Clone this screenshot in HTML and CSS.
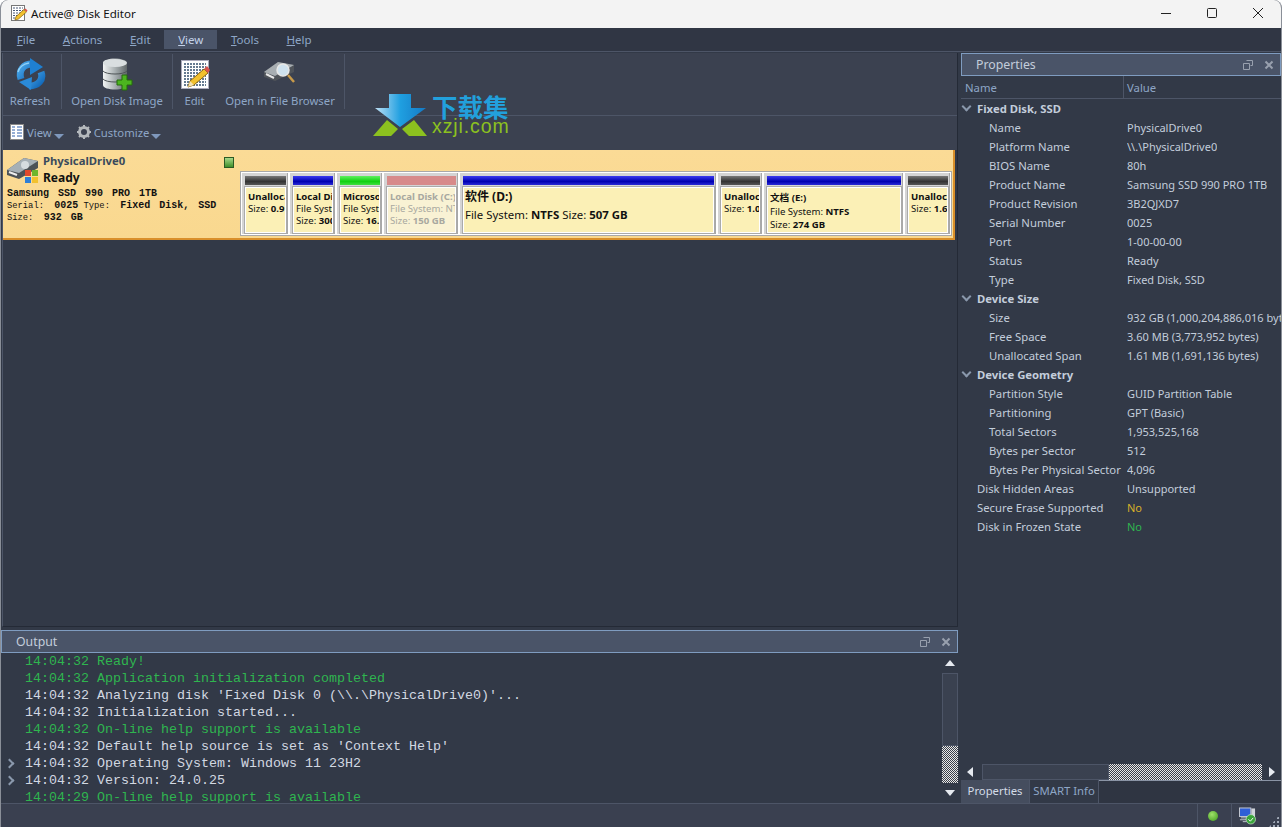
FILE: index.html
```html
<!DOCTYPE html>
<html lang="en">

<head>
    <meta charset="UTF-8">
    <meta name="viewport" content="width=device-width, initial-scale=1.0">
    <title>Active@ Disk Editor</title>
    <link rel="stylesheet" href="styles.css">
</head>

<body>
    <div class="window">
        <header class="titlebar">
            <svg class="app-icon" width="18" height="18" viewBox="0 0 18 18">
                <rect x="1.5" y="1.5" width="13" height="15" fill="#fff" stroke="#777" />
                <path d="M3 4h10M3 6.500h10M3 9h8M3 11.500h5M3 14h3" stroke="#4a5a78" stroke-dasharray="2 1" />
                <path d="M5 16l1-3.500 8-7 2.500 2.500-8 7z" fill="#f2c12e" stroke="#8a6410" stroke-width=".7" />
                <path d="M14 5.500l2.500 2.500 1-1.500-2-2z" fill="#d9534f" />
            </svg>
            <span class="titlebar-text">Active@ Disk Editor</span>
            <div class="window-buttons">
                <svg width="12" height="12" viewBox="0 0 12 12"><path d="M1 6.500h10" stroke="#222" /></svg>
                <svg width="12" height="12" viewBox="0 0 12 12"><rect x="1.500" y="1.500" width="9" height="9" rx="1" fill="none" stroke="#222" /></svg>
                <svg width="12" height="12" viewBox="0 0 12 12"><path d="M1 1l10 10M11 1L1 11" stroke="#222" /></svg>
            </div>
        </header>

        <nav class="menubar">
            <span class="menu-item"><u>F</u>ile</span>
            <span class="menu-item"><u>A</u>ctions</span>
            <span class="menu-item"><u>E</u>dit</span>
            <span class="menu-item menu-item-active"><u>V</u>iew</span>
            <span class="menu-item"><u>T</u>ools</span>
            <span class="menu-item"><u>H</u>elp</span>
        </nav>

        <div class="workspace">
            <div class="left-column">
                <section class="disk-view">
                    <div class="toolbar">
                        <div class="tool-group tool-group-refresh">
                            <div class="tool">
                                <svg width="32" height="34" viewBox="0 0 32 34">
                                    <defs>
                                        <linearGradient id="blue" x1="0" y1="0" x2="1" y2="1">
                                            <stop offset="0" stop-color="#4aa8ea" />
                                            <stop offset="1" stop-color="#0f66b8" />
                                        </linearGradient>
                                    </defs>
                                    <path d="M7 22C4 13 10 7 18 7" fill="none" stroke="url(#blue)" stroke-width="7" />
                                    <path d="M16 1l13 9-13 8z" fill="#1f80d2" />
                                    <path d="M27 15c3 8-3 14-12 14" fill="none" stroke="url(#blue)" stroke-width="7" />
                                    <path d="M18 20L5 25l12 8z" fill="#2a8ad8" />
                                    <path d="M4 15c1-4 5-8 11-9" fill="none" stroke="#8fd0f6" stroke-width="1.500" />
                                </svg>
                                <span>Refresh</span>
                            </div>
                        </div>
                        <div class="tool-group tool-group-image">
                            <div class="tool">
                                <svg width="32" height="34" viewBox="0 0 32 34">
                                    <defs>
                                        <linearGradient id="steel" x1="0" y1="0" x2="1" y2="0">
                                            <stop offset="0" stop-color="#f2f4f4" />
                                            <stop offset=".5" stop-color="#a9b0b2" />
                                            <stop offset="1" stop-color="#5f6668" />
                                        </linearGradient>
                                    </defs>
                                    <path d="M2 6c0-6 24-6 24 0v22c0 6-24 6-24 0z" fill="url(#steel)" />
                                    <ellipse cx="14" cy="6" rx="12" ry="4" fill="#d9dee0" />
                                    <path d="M2 14c3 4 21 4 24 0M2 22c3 4 21 4 24 0" stroke="#4f5557" fill="none" />
                                    <path d="M21 18h5v5h5v5h-5v5h-5v-5h-5v-5h5z" fill="#4cb51f" stroke="#256b0c" />
                                </svg>
                                <span>Open Disk Image</span>
                            </div>
                        </div>
                        <div class="tool-group tool-group-edit">
                            <div class="tool tool-edit">
                                <svg width="30" height="34" viewBox="0 0 30 34">
                                    <rect x="1.500" y="3.500" width="27" height="28" fill="#fff" stroke="#aab" />
                                    <path d="M4 7h22M4 10h22M4 13h22M4 16h22M4 19h22M4 22h22M4 25h22M4 28h22" stroke="#34506e" stroke-width="1.500" stroke-dasharray="2 1" />
                                    <path d="M8 30l2-6 14-12 4 4-14 12z" fill="#f2c12e" stroke="#8a6410" />
                                    <path d="M24 12l4 4 2-3-3-4z" fill="#d9534f" />
                                    <path d="M8 30l2-6 4 4z" fill="#f5e2b0" />
                                </svg>
                                <span>Edit</span>
                            </div>
                            <div class="tool tool-browser">
                                <svg width="34" height="34" viewBox="0 0 34 34">
                                    <path d="M1 15L15 5l16 3v7L12 24 1 20z" fill="#50545a" />
                                    <path d="M1 15L15 5l16 3-19 11z" fill="#a8aeb2" />
                                    <path d="M3 17l8 4" stroke="#e8e8e8" stroke-width="2" />
                                    <circle cx="20" cy="13" r="6" fill="#cfe2ef" stroke="#e8e8e8" stroke-width="1.500" />
                                    <path d="M25 18l6 7" stroke="#c89a4a" stroke-width="2.500" />
                                </svg>
                                <span>Open in File Browser</span>
                            </div>
                        </div>
                    </div>

                    <div class="subtoolbar">
                        <div class="subtool">
                            <svg width="14" height="16" viewBox="0 0 14 16">
                                <rect x=".5" y=".5" width="13" height="15" fill="#fff" stroke="#888" />
                                <path d="M2 3h3M2 6h3M2 9h3M2 12h3M7 3h5M7 6h5M7 9h5M7 12h5" stroke="#2f5fa8" />
                            </svg>
                            <span>View</span>
                            <i class="drop-arrow"></i>
                        </div>
                        <div class="subtool">
                            <svg width="14" height="14" viewBox="0 0 14 14">
                                <circle cx="7" cy="7" r="4.500" fill="none" stroke="#b4b8bc" stroke-width="3" />
                                <path d="M7 0v3M7 11v3M0 7h3M11 7h3M2 2l2 2M10 10l2 2M12 2l-2 2M2 12l2-2" stroke="#b4b8bc" stroke-width="2" />
                            </svg>
                            <span>Customize</span>
                            <i class="drop-arrow"></i>
                        </div>
                    </div>

                    <div class="disk-row">
                        <div class="disk-info">
                            <div class="disk-head">
                                <svg class="disk-icon" width="33" height="28" viewBox="0 0 33 28">
                                    <path d="M1 13L18 1l14 3v7L13 22 1 18z" fill="#4d5357" />
                                    <path d="M1 13L18 1l14 3-19 12z" fill="#a6b0b6" />
                                    <circle cx="19" cy="8" r="4" fill="#d6dcdf" />
                                    <path d="M3 15l8 3" stroke="#eee" stroke-width="2" />
                                    <rect x="19" y="13" width="6" height="6" fill="#e0492c" />
                                    <rect x="26" y="13" width="6" height="6" fill="#6fb52c" />
                                    <rect x="19" y="20" width="6" height="6" fill="#2f7fd6" />
                                    <rect x="26" y="20" width="6" height="6" fill="#f2c12e" />
                                </svg>
                                <div class="disk-title">
                                    <span class="disk-name">PhysicalDrive0</span>
                                    <span class="disk-state">Ready</span>
                                </div>
                                <i class="disk-led"></i>
                            </div>
                            <div class="disk-line"><b class="first">Samsung SSD 990 PRO 1TB</b></div>
                            <div class="disk-line">Serial: <b>0025</b> Type: <b>Fixed Disk, SSD</b></div>
                            <div class="disk-line">Size: <b>932 GB</b></div>
                        </div>

                        <div class="partitions">
                            <div class="part part-small part-free part-first">
                                <div class="part-bar"></div>
                                <div class="part-body"><b>Unallocated</b><span>Size: <b>0.9 MB</b></span></div>
                            </div>
                            <div class="part part-small part-ntfs">
                                <div class="part-bar"></div>
                                <div class="part-body"><b>Local Disk</b><span>File System</span><span>Size: <b>300 MB</b></span></div>
                            </div>
                            <div class="part part-small part-ms">
                                <div class="part-bar"></div>
                                <div class="part-body"><b>Microsoft</b><span>File System</span><span>Size: <b>16.0 MB</b></span></div>
                            </div>
                            <div class="part part-c part-dim">
                                <div class="part-bar"></div>
                                <div class="part-body"><b>Local Disk (C:)</b><span>File System: NTFS</span><span>Size: <b>150 GB</b></span></div>
                            </div>
                            <div class="part part-d part-ntfs">
                                <div class="part-bar"></div>
                                <div class="part-body part-body-large"><b class="part-d-name">软件 (D:)</b><span>File System: <b>NTFS</b> Size: <b>507 GB</b></span></div>
                            </div>
                            <div class="part part-small part-free part-thin">
                                <div class="part-bar"></div>
                                <div class="part-body"><b>Unallocated</b><span>Size: <b>1.0 MB</b></span></div>
                            </div>
                            <div class="part part-e part-ntfs">
                                <div class="part-bar"></div>
                                <div class="part-body"><b>文档 (E:)</b><span>File System: <b>NTFS</b></span><span>Size: <b>274 GB</b></span></div>
                            </div>
                            <div class="part part-small part-free">
                                <div class="part-bar"></div>
                                <div class="part-body"><b>Unallocated</b><span>Size: <b>1.6 MB</b></span></div>
                            </div>
                        </div>
                    </div>
                </section>

                <section class="output-pane">
                    <div class="pane-title">
                        <span>Output</span>
                        <div class="pane-buttons">
                            <svg width="10" height="10" viewBox="0 0 10 10"><path d="M3.500.5h6v5h-2M.5 3.500h6v6h-6z" fill="none" stroke="#98a0ae" /></svg>
                            <svg width="10" height="10" viewBox="0 0 10 10"><path d="M1.500 1.500l7 7M8.500 1.500l-7 7" stroke="#98a0ae" stroke-width="2" /></svg>
                        </div>
                    </div>
                    <div class="output-body">
                        <div class="log">
                            <div class="log-line log-ok">14:04:32 Ready!</div>
                            <div class="log-line log-ok">14:04:32 Application initialization completed</div>
                            <div class="log-line">14:04:32 Analyzing disk 'Fixed Disk 0 (\\.\PhysicalDrive0)'...</div>
                            <div class="log-line">14:04:32 Initialization started...</div>
                            <div class="log-line log-ok">14:04:32 On-line help support is available</div>
                            <div class="log-line">14:04:32 Default help source is set as 'Context Help'</div>
                            <div class="log-line log-more">14:04:32 Operating System: Windows 11 23H2</div>
                            <div class="log-line log-more">14:04:32 Version: 24.0.25</div>
                            <div class="log-line log-ok">14:04:29 On-line help support is available</div>
                        </div>
                        <div class="vscroll">
                            <i class="arrow-up"></i>
                            <div class="vscroll-track"></div>
                            <div class="vscroll-thumb dither"></div>
                            <i class="arrow-down"></i>
                        </div>
                    </div>
                </section>
            </div>

            <aside class="props-pane">
                <div class="pane-title">
                    <span>Properties</span>
                    <div class="pane-buttons">
                        <svg width="10" height="10" viewBox="0 0 10 10"><path d="M3.500.5h6v5h-2M.5 3.500h6v6h-6z" fill="none" stroke="#98a0ae" /></svg>
                        <svg width="10" height="10" viewBox="0 0 10 10"><path d="M1.500 1.500l7 7M8.500 1.500l-7 7" stroke="#98a0ae" stroke-width="2" /></svg>
                    </div>
                </div>
                <div class="props-head"><span class="col-name">Name</span><span class="col-value">Value</span></div>
                <div class="props-list">
                    <div class="prop prop-group"><i class="chevron"></i>Fixed Disk, SSD</div>
                    <div class="prop"><span class="prop-name">Name</span><span class="prop-value">PhysicalDrive0</span></div>
                    <div class="prop"><span class="prop-name">Platform Name</span><span class="prop-value">\\.\PhysicalDrive0</span></div>
                    <div class="prop"><span class="prop-name">BIOS Name</span><span class="prop-value">80h</span></div>
                    <div class="prop"><span class="prop-name">Product Name</span><span class="prop-value">Samsung SSD 990 PRO 1TB</span></div>
                    <div class="prop"><span class="prop-name">Product Revision</span><span class="prop-value">3B2QJXD7</span></div>
                    <div class="prop"><span class="prop-name">Serial Number</span><span class="prop-value">0025</span></div>
                    <div class="prop"><span class="prop-name">Port</span><span class="prop-value">1-00-00-00</span></div>
                    <div class="prop"><span class="prop-name">Status</span><span class="prop-value">Ready</span></div>
                    <div class="prop"><span class="prop-name">Type</span><span class="prop-value">Fixed Disk, SSD</span></div>
                    <div class="prop prop-group"><i class="chevron"></i>Device Size</div>
                    <div class="prop"><span class="prop-name">Size</span><span class="prop-value">932 GB (1,000,204,886,016 bytes)</span></div>
                    <div class="prop"><span class="prop-name">Free Space</span><span class="prop-value">3.60 MB (3,773,952 bytes)</span></div>
                    <div class="prop"><span class="prop-name">Unallocated Span</span><span class="prop-value">1.61 MB (1,691,136 bytes)</span></div>
                    <div class="prop prop-group"><i class="chevron"></i>Device Geometry</div>
                    <div class="prop"><span class="prop-name">Partition Style</span><span class="prop-value">GUID Partition Table</span></div>
                    <div class="prop"><span class="prop-name">Partitioning</span><span class="prop-value">GPT (Basic)</span></div>
                    <div class="prop"><span class="prop-name">Total Sectors</span><span class="prop-value">1,953,525,168</span></div>
                    <div class="prop"><span class="prop-name">Bytes per Sector</span><span class="prop-value">512</span></div>
                    <div class="prop"><span class="prop-name">Bytes Per Physical Sector</span><span class="prop-value">4,096</span></div>
                    <div class="prop prop-top"><span class="prop-name">Disk Hidden Areas</span><span class="prop-value">Unsupported</span></div>
                    <div class="prop prop-top"><span class="prop-name">Secure Erase Supported</span><span class="prop-value value-warn">No</span></div>
                    <div class="prop prop-top"><span class="prop-name">Disk in Frozen State</span><span class="prop-value value-good">No</span></div>
                </div>
                <div class="hscroll">
                    <i class="arrow-left"></i>
                    <div class="hscroll-track"></div>
                    <div class="hscroll-thumb dither"></div>
                    <i class="arrow-right"></i>
                </div>
                <div class="tabs">
                    <span class="tab tab-active">Properties</span>
                    <span class="tab">SMART Info</span>
                    <div class="tabs-rest"></div>
                </div>
            </aside>
        </div>

        <footer class="statusbar">
            <div class="status-cell status-led"><i class="led"></i></div>
            <div class="status-cell status-net">
                <svg width="17" height="18" viewBox="0 0 18 18">
                    <rect x=".5" y=".5" width="12" height="9" fill="#2f5fd6" stroke="#c8ccd4" />
                    <rect x="13" y="1" width="4" height="9" fill="#d0d4da" />
                    <path d="M2 11h10M1 13h7M4 15h4" stroke="#c8ccd4" />
                    <circle cx="12.500" cy="12.500" r="5" fill="#3aa53a" stroke="#e8f5e8" stroke-width=".6" />
                    <path d="M10 12.500l2 2 3-3.500" stroke="#fff" fill="none" />
                </svg>
            </div>
            <div class="grip"></div>
        </footer>

        <div class="watermark">
            <svg width="54" height="44" viewBox="0 0 54 44">
                <defs>
                    <linearGradient id="wm" x1="0" y1="0" x2="1" y2="0">
                        <stop offset="0" stop-color="#bfe0f5" />
                        <stop offset=".5" stop-color="#1f9fe0" />
                        <stop offset="1" stop-color="#1579c4" />
                    </linearGradient>
                </defs>
                <path d="M16 1h22v14h15L27 34 2 15h14z" fill="url(#wm)" />
                <path d="M0 43l14-16 11 9-7 7zM54 43L41 27l-12 9 7 7z" fill="#8cc11f" />
            </svg>
            <div class="watermark-text">
                <span class="watermark-cn">下载集</span>
                <span class="watermark-url">xzji.com</span>
            </div>
        </div>
    </div>
</body>

</html>
```

FILE: styles.css
```css
html {
    box-sizing: border-box;
}

*,
*::before,
*::after {
    box-sizing: inherit;
    margin: 0;
    padding: 0;
}

:root {
    --bg-color: #323947;
    --panel-color: #3b4150;
    --menu-color: #303644;
    --line-color: #4d5567;
    --title-color: #4a5468;
    --text-color: #c3cddb;
    --text-dim: #8ea6c6;
    --ok-color: #2fb54f;
}

body {
    background-color: #fff;
    font-family: 'Noto Sans', 'Noto Sans CJK SC', sans-serif;
    font-size: 11.300px;
    overflow: hidden;
}

svg {
    display: block;
    flex-shrink: 0;
}

.window {
    position: relative;
    width: 1282px;
    height: 827px;
    display: flex;
    flex-direction: column;
    background-color: var(--bg-color);
    border-left: 1px solid #8a8f98;
    border-right: 1px solid #8a8f98;
    border-radius: 8px 8px 0 0;
    overflow: hidden;
}

.titlebar {
    height: 28px;
    display: flex;
    align-items: center;
    flex-shrink: 0;
    background-color: #f3f3f3;
    padding: 0 0 2px 9px;
    color: #111;
}

.titlebar-text {
    margin-left: 3px;
    font-size: 11.600px;
}

.window-buttons {
    margin-left: auto;
    display: flex;
    gap: 34px;
    padding-right: 17px;
}

.menubar {
    height: 24px;
    display: flex;
    flex-shrink: 0;
    background-color: var(--menu-color);
    padding: 2px 0 2px 2px;
    border-bottom: 1px solid var(--line-color);
    color: var(--text-dim);
    font-size: 11.500px;
}

.menu-item {
    padding: 0 13.800px;
    line-height: 19px;
}

.menu-item-active {
    background-color: var(--title-color);
    color: #c3d2e8;
}

.workspace {
    flex: 1;
    display: flex;
    min-height: 0;
}

.left-column {
    width: 960px;
    display: flex;
    flex-direction: column;
    flex-shrink: 0;
}

.disk-view {
    flex: 1;
    margin: 1px 3px 3px 1px;
    border: 1px solid #242a36;
    border-width: 0 1px 1px 1px;
    border-left-color: var(--line-color);
}

.toolbar {
    height: 63px;
    display: flex;
    background-color: var(--panel-color);
    border-bottom: 1px solid var(--line-color);
    color: var(--text-dim);
}

.tool-group {
    display: flex;
    height: 55px;
    margin-top: 1px;
    border-right: 1px solid var(--line-color);
}

.tool-group-refresh {
    width: 59px;
    padding-right: 4px;
}

.tool-group-image {
    width: 111px;
}

.tool-group-edit {
    width: 172px;
}

.tool {
    flex: 1;
    display: flex;
    flex-direction: column;
    align-items: center;
    justify-content: space-between;
    padding-top: 3px;
    line-height: 16px;
}

.tool-edit {
    flex: none;
    width: 43px;
}

.subtoolbar {
    height: 34px;
    display: flex;
    align-items: center;
    gap: 13px;
    padding: 0 0 2px 7px;
    background-color: var(--panel-color);
    color: var(--text-dim);
}

.subtool {
    display: flex;
    align-items: center;
    gap: 3px;
}

.drop-arrow {
    width: 0;
    height: 0;
    margin: 8px 0 0 -1px;
    border-left: 5px solid transparent;
    border-right: 5px solid transparent;
    border-top: 5px solid #7f98bc;
}

.disk-row {
    height: 90px;
    display: flex;
    background: linear-gradient(#fbdb96, #f9d88f);
    border-right: 2px solid #d98f2a;
    border-bottom: 2px solid #d98f2a;
    margin-right: 2px;
    color: #111;
}

.disk-info {
    width: 238px;
    flex-shrink: 0;
    padding: 3px 0 0 3px;
}

.disk-head {
    display: flex;
    height: 35px;
}

.disk-icon {
    margin: 4px 4px 0 0;
}

.disk-title {
    display: flex;
    flex-direction: column;
    width: 181px;
    padding-top: 1px;
}

.disk-name {
    font-weight: bold;
    font-size: 11.300px;
    line-height: 14px;
    color: #3a4a5c;
}

.disk-state {
    font-weight: bold;
    line-height: 20px;
    font-size: 12px;
}

.disk-led {
    width: 10px;
    height: 11px;
    margin-top: 4px;
    background: linear-gradient(#a8d88a, #3f8f2a);
    border: 1px solid #2c5a24;
}

.disk-line {
    padding-left: 1px;
    font-family: 'Liberation Mono', monospace;
    font-size: 8.800px;
    line-height: 12px;
    white-space: nowrap;
}

.disk-line b {
    margin-left: 5px;
    font-size: 10px;
    word-spacing: 3px;
}

.disk-line b.first {
    margin-left: 0;
}

.partitions {
    flex: 1;
    height: 63px;
    margin: 22px 4px 0 0;
    display: flex;
    box-shadow: 0 0 0 1px #a8a8a8;
}

.part {
    display: flex;
    flex-direction: column;
    gap: 2px;
    padding: 3px 2px 1px 3px;
    background-color: #d4d4d4;
    border: 1px solid #fff;
    overflow: hidden;
    box-shadow: inset -1px 0 0 #a8a8a8;
}

.part-small {
    width: 47px;
}

.part-first {
    width: 48px;
}

.part-thin {
    width: 46px;
}

.part-c {
    width: 76px;
}

.part-d {
    width: 258px;
}

.part-e {
    width: 141px;
}

.part-bar {
    height: 9px;
    flex-shrink: 0;
}

.part-free .part-bar {
    background: linear-gradient(#777, #333 60%, #555);
}

.part-ntfs .part-bar {
    background: linear-gradient(#3a3af0, #0000b0 60%, #2a2ad8);
}

.part-ms .part-bar {
    background: linear-gradient(#5ff05f, #12d012 60%, #40e040);
}

.part-dim .part-bar {
    background: #d78a8a;
}

.part-body {
    flex: 1;
    display: flex;
    flex-direction: column;
    padding: 3px 0 0 2px;
    background-color: #fbf0b6;
    border: 1px solid #fff;
    box-shadow: 0 0 0 1px #aaa;
    font-size: 9.600px;
    line-height: 12px;
    white-space: nowrap;
    overflow: hidden;
}

.part-dim .part-body {
    background-color: #f9f2d4;
    color: #a8a8a0;
}

.part-body-large {
    padding: 0 0 0 1px;
    font-size: 11.400px;
    line-height: 18px;
}

.part-d-name {
    font-size: 12px;
}

.part-e .part-body {
    line-height: 13.500px;
}

.output-pane {
    height: 173px;
    display: flex;
    flex-direction: column;
    margin-right: 3px;
}

.pane-title {
    height: 23px;
    display: flex;
    align-items: center;
    flex-shrink: 0;
    padding-left: 14px;
    background-color: var(--title-color);
    border: 1px solid #7f9cc0;
    color: #c3cddb;
    font-size: 12.300px;
}

.pane-buttons {
    margin-left: auto;
    display: flex;
    gap: 11px;
    padding-right: 6px;
}

.output-body {
    flex: 1;
    display: flex;
    min-height: 0;
}

.log {
    flex: 1;
    overflow: hidden;
    font-family: 'Liberation Mono', monospace;
    font-size: 13.330px;
    line-height: 17px;
    color: #d2d8e2;
}

.log-line {
    padding-left: 24px;
    position: relative;
    white-space: pre;
}

.log-ok {
    color: var(--ok-color);
}

.log-more::before {
    content: '';
    position: absolute;
    left: 5px;
    top: 5px;
    width: 7px;
    height: 7px;
    border-top: 2px solid #8a98ac;
    border-right: 2px solid #8a98ac;
    transform: rotate(45deg);
}

.vscroll {
    width: 16px;
    display: flex;
    flex-direction: column;
    align-items: center;
}

.vscroll-track {
    height: 73px;
    width: 16px;
    margin-top: 20px;
    border: 1px solid var(--line-color);
    background-color: #3a4150;
}

.vscroll-thumb {
    height: 37px;
    width: 16px;
}

.dither {
    background: repeating-conic-gradient(#e8e8e8 0 25%, #3a3f4a 0 50%) 0 0 / 2px 2px;
}

.arrow-up,
.arrow-down {
    width: 0;
    height: 0;
    border-left: 5px solid transparent;
    border-right: 5px solid transparent;
}

.arrow-up {
    margin-top: 7px;
    margin-bottom: -13px;
    border-bottom: 6px solid #e6eaf0;
}

.arrow-down {
    margin-top: 7px;
    border-top: 6px solid #e6eaf0;
}

.props-pane {
    width: 320px;
    display: flex;
    flex-direction: column;
    margin-top: 1px;
}

.props-head {
    height: 23px;
    display: flex;
    flex-shrink: 0;
    align-items: center;
    border-bottom: 1px solid var(--line-color);
    color: var(--text-dim);
}

.col-name {
    width: 163px;
    height: 100%;
    padding-left: 4px;
    line-height: 23px;
    border-right: 1px solid var(--line-color);
}

.col-value {
    padding-left: 3px;
}

.props-list {
    flex: 1;
    overflow: hidden;
}

.prop {
    height: 19px;
    display: flex;
    align-items: center;
    white-space: nowrap;
    color: var(--text-color);
    line-height: 19px;
}

.prop-name {
    width: 166px;
    padding-left: 28px;
    flex-shrink: 0;
}

.prop-top .prop-name {
    padding-left: 16px;
}

.prop-value {
    overflow: hidden;
    font-size: 11px;
}

.prop-group {
    font-weight: bold;
}

.value-warn {
    color: #d8b02a;
}

.value-good {
    color: #2fb54f;
}

.chevron {
    width: 7px;
    height: 7px;
    margin: -4px 7px 0 2px;
    border-right: 2px solid #8a98ac;
    border-bottom: 2px solid #8a98ac;
    transform: rotate(45deg);
}

.hscroll {
    height: 16px;
    display: flex;
    align-items: center;
    flex-shrink: 0;
    padding-left: 6px;
}

.hscroll-track {
    width: 127px;
    height: 16px;
    margin-left: 9px;
    border: 1px solid var(--line-color);
    background-color: #3a4150;
}

.hscroll-thumb {
    width: 153px;
    height: 16px;
}

.arrow-left,
.arrow-right {
    width: 0;
    height: 0;
    border-top: 5px solid transparent;
    border-bottom: 5px solid transparent;
}

.arrow-left {
    border-right: 6px solid #e6eaf0;
}

.arrow-right {
    margin-left: 7px;
    border-left: 6px solid #e6eaf0;
}

.tabs {
    height: 23px;
    display: flex;
    flex-shrink: 0;
}

.tab {
    width: 69px;
    line-height: 22px;
    text-align: center;
    color: var(--text-dim);
    border-right: 1px solid var(--line-color);
}

.tab-active {
    background-color: #454d5e;
    color: #d4dce8;
}

.tabs-rest {
    flex: 1;
    border-top: 1px solid #8a93a4;
    background-color: #2f3542;
}

.statusbar {
    height: 24px;
    display: flex;
    flex-shrink: 0;
    justify-content: flex-end;
    align-items: stretch;
    background-color: #3a4050;
    border-top: 1px solid var(--line-color);
}

.status-cell {
    display: flex;
    align-items: center;
    justify-content: center;
    border-left: 1px solid var(--line-color);
}

.status-led {
    width: 34px;
    padding-right: 3px;
}

.status-net {
    width: 33px;
    justify-content: flex-start;
    padding-left: 7px;
}

.led {
    width: 10px;
    height: 10px;
    border-radius: 50%;
    background: radial-gradient(circle at 40% 35%, #9fe06a, #3e9a1a);
}

.grip {
    width: 17px;
    background: radial-gradient(#a0a8b6 1px, transparent 1.200px) 0 0 / 4px 4px;
    clip-path: polygon(100% 40%, 100% 100%, 30% 100%);
}

.watermark {
    position: absolute;
    left: 372px;
    top: 93px;
    display: flex;
    gap: 5px;
}

.watermark-text {
    display: flex;
    flex-direction: column;
    line-height: 1;
}

.watermark-cn {
    color: #22a0dc;
    font-family: 'Noto Sans CJK SC', sans-serif;
    font-size: 25.500px;
    font-weight: bold;
    line-height: 25px;
}

.watermark-url {
    color: #8cc11f;
    font-family: 'Liberation Sans', sans-serif;
    font-size: 19.500px;
    line-height: 16px;
    letter-spacing: .9px;
}
```
